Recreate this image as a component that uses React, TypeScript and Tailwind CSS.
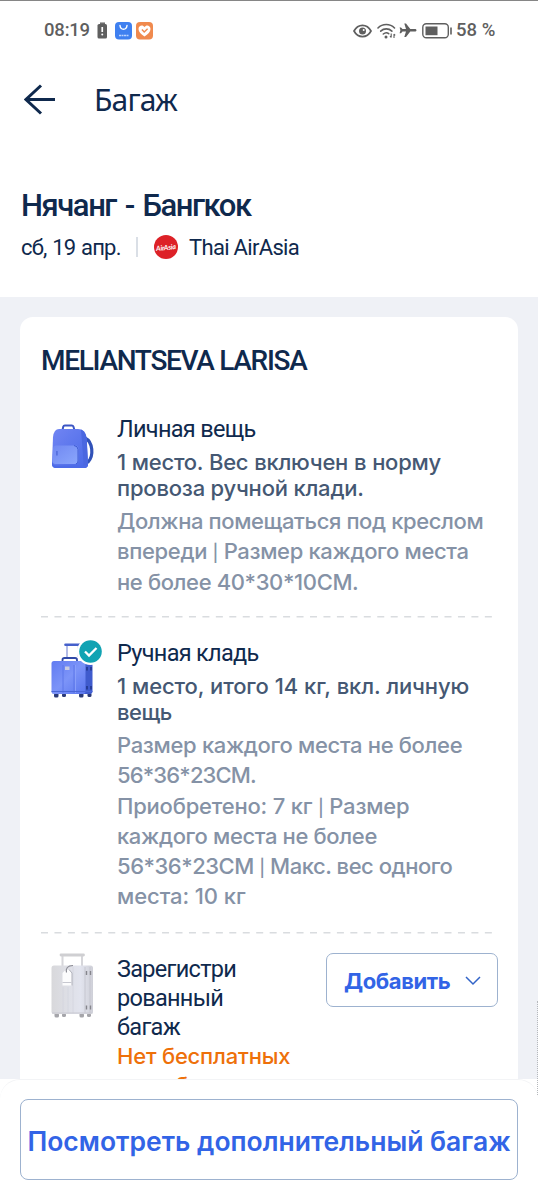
import type { ReactNode } from "react";

function StatusBar() {
  return (
    <div className="flex h-[60px] items-center border-t border-[#868686] pl-[44px] pr-[42px] font-['Roboto',sans-serif] text-[#5f5f5f]">
      <span className="w-[46px] whitespace-nowrap pt-px text-[18.5px] font-medium tracking-[-0.2px]">08:19</span>
      <svg className="ml-[7px]" width="11" height="17" viewBox="0 0 11 17">
        <path d="M3 0.5h5v1.4H3z" fill="#5f5f5f" />
        <rect x="0.5" y="2" width="9.5" height="14.5" rx="1.6" fill="#5f5f5f" />
        <path d="M5.25 5v5" stroke="#fff" strokeWidth="1.7" />
        <circle cx="5.25" cy="12.4" r="1" fill="#fff" />
      </svg>
      <svg className="ml-[7px]" width="17" height="18" viewBox="0 0 17 18">
        <rect width="17" height="17.5" rx="4" fill="#3f80f0" />
        <path d="M5 3.5c.5 5 6.5 5 7 0" fill="none" stroke="#fff" strokeWidth="1.4" strokeLinecap="round" />
        <path d="M4 13.5h9.5" stroke="#bcd4ff" strokeWidth="1.3" strokeDasharray="2 .5" />
      </svg>
      <svg className="ml-[4px]" width="17" height="18" viewBox="0 0 17 18">
        <rect width="17" height="17.5" rx="4" fill="#f08a4e" />
        <path d="M8.5 14.5C5 12 2.5 10 2.5 7c0-3.6 4.3-4.7 6-1.9 1.7-2.8 6-1.7 6 1.9 0 3-2.5 5-6 7.5z" fill="#fff" />
        <path d="M5.9 7.6l2.3 2.3 3.4-3.2" fill="none" stroke="#f08a4e" strokeWidth="1.4" />
      </svg>

      <div className="ml-auto flex items-center">
        <svg width="19" height="14" viewBox="0 0 19 14">
          <path d="M1 7c4-7.5 13-7.5 17 0-4 7.5-13 7.5-17 0z" fill="none" stroke="#5f5f5f" strokeWidth="1.7" />
          <circle cx="9.5" cy="7" r="3.5" fill="#5f5f5f" />
          <circle cx="10.7" cy="5.9" r="1" fill="#fff" />
        </svg>
        <svg className="ml-[5px]" width="19" height="16" viewBox="0 0 19 16">
          <g fill="none" stroke="#5f5f5f" strokeWidth="1.6" strokeLinecap="round">
            <path d="M1 5c4.5-4.7 12-4.7 16.5 0" />
            <path d="M3.7 8.1c3.2-3 8-3 11.2 0" />
            <path d="M6.3 11c1.8-1.5 4-1.5 5.4-.3" />
          </g>
          <circle cx="9" cy="13.9" r="1.5" fill="#5f5f5f" />
          <path d="M14.2 10.5v4M13 13.2l1.2 1.3M17 15v-4M17 11l1.2 1.3" fill="none" stroke="#5f5f5f" strokeWidth="1.1" />
        </svg>
        <svg className="ml-[3px]" width="18" height="15" viewBox="0 0 18 15">
          <path d="M17.5 7.3c0-.8-.8-1.2-1.6-1.2h-4.6L7 .5H5.3l1.7 5.600H3.5L2 4.4H.6l.8 2.9-.8 2.9H2l1.5-1.7H7l-1.7 5.600H7l4.3-5.600h4.6c.8 0 1.6-.4 1.6-1.2z" fill="#5f5f5f" />
        </svg>
        <svg className="ml-[5px]" width="31" height="16" viewBox="0 0 31 16">
          <rect x="0.8" y="0.8" width="25.5" height="14" rx="3.5" fill="none" stroke="#5f5f5f" strokeWidth="1.4" />
          <rect x="3.5" y="3.5" width="12" height="8.7" fill="#5f5f5f" />
          <path d="M29 4.5v7" stroke="#5f5f5f" strokeWidth="1.6" />
        </svg>
        <span className="ml-[3px] w-[40px] whitespace-nowrap pt-px text-[18.5px] font-medium">58 %</span>
      </div>
    </div>
  );
}

function AirlineLogo() {
  return (
    <span className="ml-[16px] flex size-[24px] items-center justify-center rounded-full bg-[#dd2127]">
      <span className="-rotate-6 whitespace-nowrap font-['Lato',sans-serif] text-[7px] font-bold italic leading-none tracking-[-0.2px] text-white">
        AirAsia
      </span>
    </span>
  );
}

function Backpack() {
  return (
    <svg width="44" height="46" viewBox="0 0 44 46">
      <defs>
        <linearGradient id="pack" x1="0" y1="0" x2="1" y2="1">
          <stop offset="0" stopColor="#7185f3" />
          <stop offset="1" stopColor="#4868e6" />
        </linearGradient>
        <linearGradient id="pocket" x1="0" y1="0" x2="1" y2="1">
          <stop offset="0" stopColor="#7088f2" />
          <stop offset="1" stopColor="#8ba7fc" />
        </linearGradient>
      </defs>
      <path d="M34 14c8 4 9 18 3 24l-4 2" fill="none" stroke="#3152b8" strokeWidth="3.2" />
      <path d="M11.5 6l.8-3.5q.3-1 1.500-1h7q1.2 0 1.6 1l1 3.5" fill="none" stroke="#3b55c4" strokeWidth="2" />
      <path d="M8 5h19q7 0 8.5 9l1.5 26q0 4-4 4H5q-4 0-4-4L2 13Q3 5 8 5z" fill="url(#pack)" />
      <path d="M30 5.5q5 2 5.8 9L37 40q0 4-4 4h-4q4-2 3.5-6z" fill="#4a67e0" />
      <path d="M1 37v3q0 4 4 4h28q4 0 4-4v-1q-1 2.5-4 2.5H5q-3 0-4-4.5z" fill="#4c6ae7" />
      <path d="M5 21.5h19q3.5 0 3.5 4V36q0 4-4 4H4.5q-3 0-3-3L2 25q0-3.5 3-3.5z" fill="url(#pocket)" />
      <path d="M23 21.5q4 .5 4 4V37q0 2-2 3" fill="none" stroke="#3e5bd4" strokeWidth="1" />
      <rect x="5" y="27" width="1.8" height="4.5" fill="#5670df" />
    </svg>
  );
}

function CabinCase() {
  return (
    <svg width="44" height="55" viewBox="0 0 44 55">
      <defs>
        <linearGradient id="cabin" x1="0" y1="0" x2="1" y2="1">
          <stop offset="0" stopColor="#617bf1" />
          <stop offset="0.5" stopColor="#7c94f8" />
          <stop offset="1" stopColor="#5a76ee" />
        </linearGradient>
      </defs>
      <path d="M16 2v12M27.5 2v12" stroke="#9aa7e0" strokeWidth="1.5" />
      <path d="M14.5 1.8h15" stroke="#4560cb" strokeWidth="2.6" strokeLinecap="round" />
      <path d="M11.5 19v-2.3q0-1.7 2-1.7h10.5q2 0 2 1.700V19" fill="none" stroke="#304aa8" strokeWidth="1.8" />
      <g fill="#2b3a78">
        <rect x="3" y="50" width="4.5" height="4.5" rx="1.5" />
        <rect x="11" y="50" width="4" height="4" rx="1.5" />
        <rect x="28" y="50" width="4.5" height="4.5" rx="1.5" />
        <rect x="36.5" y="50" width="4" height="4" rx="1.5" />
      </g>
      <path d="M30 18h9q2.5 0 2.5 3v27q0 3-2.5 3h-9z" fill="#3f5bcd" />
      <rect x="0.5" y="18" width="34" height="33" rx="2.5" fill="url(#cabin)" />
      <path d="M12 22v28M23 22v28" stroke="#5a74e8" strokeWidth="0.9" />
      <path d="M24.5 22v28" stroke="#8aa0fa" strokeWidth="0.9" />
      <path d="M0.5 48.5h41" stroke="#4a66d8" strokeWidth="1" />
      <rect x="14" y="23.5" width="4.5" height="3.5" fill="#c8cbe0" />
      <path d="M36 24v3.5M40 24v3.5M36 43v3.5M40 43v3.5" stroke="#1f3486" strokeWidth="1.5" />
    </svg>
  );
}

function CheckedCase() {
  return (
    <svg width="44" height="65" viewBox="0 0 44 65">
      <defs>
        <linearGradient id="checked" x1="0" y1="0" x2="1" y2="0">
          <stop offset="0" stopColor="#d8d8db" />
          <stop offset="0.7" stopColor="#e2e4ee" />
          <stop offset="1" stopColor="#cfd0d8" />
        </linearGradient>
      </defs>
      <path d="M11.5 3v10M31 3v10" stroke="#d6d6da" strokeWidth="2" />
      <path d="M10 2h22.5" stroke="#cfcfd2" strokeWidth="2.8" strokeLinecap="round" />
      <g fill="#a5a5aa">
        <rect x="3.5" y="60" width="4.5" height="4.5" rx="1.6" />
        <rect x="11" y="60" width="4" height="4" rx="1.6" />
        <rect x="28.5" y="60" width="4.5" height="4.5" rx="1.6" />
        <rect x="36" y="60" width="4" height="4" rx="1.6" />
      </g>
      <rect x="0.5" y="12.5" width="41.5" height="48.5" rx="2.5" fill="url(#checked)" />
      <path d="M12 34v26M17 34v26M22 14v46" stroke="#d3d4de" strokeWidth="0.8" />
      <path d="M34 14v46M39 14v46" stroke="#c3c4cd" strokeWidth="0.9" />
      <path d="M1 60h40.5" stroke="#c8c8d0" strokeWidth="1" />
      <path d="M35.5 18v4M39.5 18v4M35.5 52.5v4M39.5 52.5v4" stroke="#85858c" strokeWidth="1.4" />
      <path d="M11.5 20l3.5-3.5h3l3 3.5v12.5h-9.5z" fill="#fcfcfd" />
      <path d="M18 16.5l3 3.5v12.5" fill="none" stroke="#b0b1ba" strokeWidth="1" />
      <path d="M11.5 29.5h9" stroke="#c7c8d0" strokeWidth="1" />
      <path d="M15.5 19.5c-1-4 1-7 6.5-7" fill="none" stroke="#898992" strokeWidth="1.1" />
    </svg>
  );
}

function Divider() {
  return (
    <svg className="ml-[21px] block" width="453" height="2" viewBox="0 0 453 2">
      <path d="M0 0.6h453" stroke="#d9dcdf" strokeWidth="1.7" strokeDasharray="7 6.45" />
    </svg>
  );
}

function Pipe() {
  return <span className="text-[17px] leading-none">|</span>;
}

function ItemTitle({ children }: { children: ReactNode }) {
  return (
    <h3 className="whitespace-nowrap font-['Roboto',sans-serif] text-[23.5px] leading-[29px] tracking-[-0.7px] text-[#0f294d]">
      {children}
    </h3>
  );
}

export default function App() {
  return (
    <div className="relative flex h-[1200px] w-[538px] flex-col overflow-hidden bg-white font-['Inter',sans-serif] text-[#0f294d]">
      <StatusBar />

      <header className="flex h-[80px] items-center pl-[24px]">
        <svg width="32" height="32" viewBox="0 0 32 32">
          <path d="M31 15.5H2M17 1.5l-15 14 15 14" fill="none" stroke="#0f294d" strokeWidth="3" />
        </svg>
        <h1 className="ml-[38px] whitespace-nowrap font-['Noto_Sans',sans-serif] text-[30px] leading-[40px] tracking-[-0.8px]">Багаж</h1>
      </header>

      <section className="h-[157px] shrink-0 pl-[21px] pt-[46px] font-['Roboto',sans-serif]">
        <h2 className="whitespace-nowrap text-[31px] font-medium leading-[40px] tracking-[-1.45px] [word-spacing:2.5px]">Нячанг - Бангкок</h2>
        <div className="mt-[7px] flex h-[28px] items-center whitespace-nowrap text-[22px]">
          <span className="w-[100px] tracking-[-0.8px] [word-spacing:1px]">сб, 19 апр.</span>
          <span className="ml-[15px] h-[20px] w-[2px] bg-[#dadfe6]" />
          <AirlineLogo />
          <span className="ml-[11px] tracking-[-0.68px]">Thai AirAsia</span>
        </div>
      </section>

      <main className="h-[782px] shrink-0 overflow-hidden bg-[#eff1f6] px-[20px] pt-[20px]">
        <div className="h-[800px] rounded-[13px] bg-white">
          <h2 className="whitespace-nowrap pl-[21px] pt-[26px] font-['Roboto',sans-serif] text-[28px] font-medium leading-[36px] tracking-[-1.3px]">
            MELIANTSEVA LARISA
          </h2>

          <div className="mt-[36px] flex h-[201px]">
            <div className="w-[97px] pl-[31px] pt-[9px]">
              <Backpack />
            </div>
            <div className="whitespace-nowrap text-[22px]">
              <ItemTitle>Личная вещь</ItemTitle>
              <div className="mt-[5px] font-medium leading-[26px] text-[#455873]">
                <p className="tracking-[-0.25px] [word-spacing:0.3px]">1 место. Вес включен в норму</p>
                <p className="tracking-[-0.2px]">провоза ручной клади.</p>
              </div>
              <div className="mt-[5px] font-[450] leading-[30.3px] text-[#8592a6]">
                <p className="tracking-[-0.4px]">Должна помещаться под креслом</p>
                <p className="tracking-[-0.34px]">впереди <Pipe /> Размер каждого места</p>
                <p className="tracking-[-0.37px]">не более 40*30*10СМ.</p>
              </div>
            </div>
          </div>
          <Divider />

          <div className="mt-[21px] flex h-[293px]">
            <div className="w-[97px] pl-[31px] pt-[4px]">
              <div className="relative">
                <CabinCase />
                <svg className="absolute -top-[5px] left-[26px]" width="27" height="27" viewBox="0 0 27 27">
                  <circle cx="13.5" cy="13.5" r="13.5" fill="#fff" />
                  <circle cx="13.5" cy="13.5" r="11.3" fill="#11a3b3" />
                  <path d="M8 13.5l4 4 7.5-7.5" fill="none" stroke="#fff" strokeWidth="2.3" />
                </svg>
              </div>
            </div>
            <div className="whitespace-nowrap text-[22px]">
              <ItemTitle>Ручная кладь</ItemTitle>
              <div className="mt-[5px] font-medium leading-[26px] text-[#455873]">
                <p className="tracking-[-0.15px] [word-spacing:0.4px]">1 место, итого 14 кг, вкл. личную</p>
                <p className="tracking-[-0.5px]">вещь</p>
              </div>
              <div className="mt-[5px] font-[450] leading-[30.3px] text-[#8592a6]">
                <p className="tracking-[-0.33px]">Размер каждого места не более</p>
                <p className="tracking-[-0.85px]">56*36*23СМ.</p>
                <p className="tracking-[-0.2px]">Приобретено: 7 кг <Pipe /> Размер</p>
                <p className="tracking-[-0.35px]">каждого места не более</p>
                <p className="tracking-[-0.47px]">56*36*23СМ <Pipe /> Макс. вес одного</p>
                <p className="tracking-[-0.08px]">места: 10 кг</p>
              </div>
            </div>
          </div>
          <Divider />

          <div className="mt-[19px] flex">
            <div className="w-[97px] pl-[31px]">
              <CheckedCase />
            </div>
            <div className="w-[209px] whitespace-nowrap pt-[2px]">
              <ItemTitle>Зарегистри</ItemTitle>
              <ItemTitle>рованный</ItemTitle>
              <ItemTitle>багаж</ItemTitle>
              <div className="text-[22px] font-medium leading-[29px] text-[#ee700a]">
                <p className="tracking-[-0.2px]">Нет бесплатных</p>
                <p className="tracking-[-0.2px]">мест багажа</p>
              </div>
            </div>
            <button className="flex h-[54px] w-[172px] items-center rounded-[7px] border border-[#9db2cf] pl-[17px] pt-[2px]">
              <span className="w-[106px] whitespace-nowrap text-left text-[22px] font-bold tracking-[-0.4px] text-[#3264e6]">Добавить</span>
              <svg className="ml-[15px]" width="16" height="10" viewBox="0 0 16 10">
                <path d="M1 1l7 7 7-7" fill="none" stroke="#3264c8" strokeWidth="1.5" />
              </svg>
            </button>
          </div>
        </div>
      </main>

      <footer className="absolute bottom-0 left-0 h-[121px] w-[538px] rounded-t-[20px] border-t border-[#f3f4f6] bg-white px-[20px] pt-[19px]">
        <button className="flex h-[81px] w-full items-center justify-center whitespace-nowrap rounded-[8px] border border-[#9db2cf] pt-[4px] text-[26.5px] font-semibold tracking-[0px] text-[#3264e6]">
          Посмотреть дополнительный багаж
        </button>
      </footer>
      <div className="absolute right-0 top-[1001px] h-[94px] border-r border-dotted border-[#b5b8bc]" />
    </div>
  );
}
